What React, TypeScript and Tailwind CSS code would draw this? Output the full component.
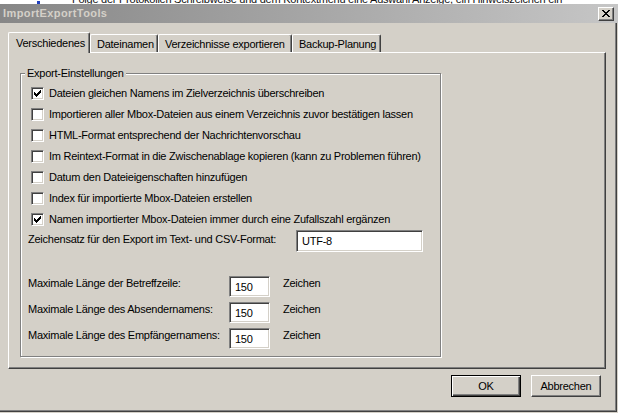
import React from 'react';

const options = [
  { label: 'Dateien gleichen Namens im Zielverzeichnis überschreiben', checked: true },
  { label: 'Importieren aller Mbox-Dateien aus einem Verzeichnis zuvor bestätigen lassen', checked: false },
  { label: 'HTML-Format entsprechend der Nachrichtenvorschau', checked: false },
  { label: 'Im Reintext-Format in die Zwischenablage kopieren (kann zu Problemen führen)', checked: false },
  { label: 'Datum den Dateieigenschaften hinzufügen', checked: false },
  { label: 'Index für importierte Mbox-Dateien erstellen', checked: false },
  { label: 'Namen importierter Mbox-Dateien immer durch eine Zufallszahl ergänzen', checked: true },
];

const limits = [
  'Maximale Länge der Betreffzeile:',
  'Maximale Länge des Absendernamens:',
  'Maximale Länge des Empfängernamens:',
];

const tabs = [
  { label: 'Verschiedenes', w: 'w-[82px]', active: true },
  { label: 'Dateinamen', w: 'w-[68px]', active: false },
  { label: 'Verzeichnisse exportieren', w: 'w-[134px]', active: false },
  { label: 'Backup-Planung', w: 'w-[89px]', active: false },
];

// win2000 style bevels
const sunken =
  'border border-t-[#808080] border-l-[#808080] border-r-white border-b-white shadow-[inset_1px_1px_0_#404040,inset_-1px_-1px_0_#d4d0c8]';
const raised =
  'border border-t-white border-l-white border-r-[#404040] border-b-[#404040] shadow-[inset_-1px_-1px_0_#808080]';

function CheckMark() {
  const cols = [2, 3, 4, 3, 2, 1, 0];
  return (
    <svg width="7" height="7" viewBox="0 0 7 7" shapeRendering="crispEdges">
      {cols.map((y, i) => (
        <rect key={i} x={i} y={y} width="1" height="3" fill="#000" />
      ))}
    </svg>
  );
}

function CloseGlyph() {
  const rows = [[0, 1, 6, 7], [1, 2, 5, 6], [2, 3, 4, 5], [3, 4], [2, 3, 4, 5], [1, 2, 5, 6], [0, 1, 6, 7]];
  return (
    <svg width="8" height="7" viewBox="0 0 8 7" shapeRendering="crispEdges">
      {rows.map((xs, y) => xs.map((x) => <rect key={`${x}-${y}`} x={x} y={y} width="1" height="1" fill="#000" />))}
    </svg>
  );
}

function Checkbox({ checked }: { checked: boolean }) {
  return (
    <span className={`w-[13px] h-[13px] shrink-0 bg-white flex items-center justify-center ${sunken}`}>
      {checked && <CheckMark />}
    </span>
  );
}

export default function App() {
  return (
    <div className="w-[618px] h-[413px] overflow-hidden bg-white flex flex-col font-['Liberation_Sans',Arial,sans-serif] text-[11px] leading-[13px] tracking-[-0.25px] text-black">
      {/* bit of the page behind the dialog */}
      <div className="h-[4px] shrink-0 overflow-hidden flex">
        <span className="ml-[37px] mt-[1px] w-[3px] h-[3px] bg-[#2040c0]" />
        <span className="ml-[32px] -mt-[7px] whitespace-nowrap text-[#111]">
          Folge der Protokollen Schreibweise und dem Kontextmenü eine Auswahl Anzeige, ein Hinweiszeichen ein
        </span>
      </div>

      {/* title bar */}
      <div className="h-[19px] shrink-0 flex items-center justify-between pl-[3px] pr-[4px] bg-gradient-to-r from-[#878787] to-[#c6c6c6]">
        <span className="font-bold text-[#d4d0c8] tracking-[0.4px]">ImportExportTools</span>
        <button className={`w-[16px] h-[14px] bg-[#d4d0c8] flex items-center justify-center ${raised}`}>
          <CloseGlyph />
        </button>
      </div>

      <div className="flex-1 bg-[#d4d0c8]">
        <div className="w-[617px] h-[389px] border-r border-b border-[#404040] shadow-[inset_-1px_-1px_0_#808080] flex flex-col">
          {/* tabs */}
          <div className="mt-[9px] h-[20px] pl-[8px] flex items-end">
            {tabs.map((t) => (
              <div
                key={t.label}
                className={`${t.w} ${
                  t.active ? 'h-[21px] -mb-px relative z-10 pl-[7px] pt-[4px]' : 'h-[18px] pl-[6px] pt-[3px]'
                } bg-[#d4d0c8] whitespace-nowrap rounded-t-[2px] border-t border-l border-r border-t-white border-l-white border-r-[#404040] shadow-[inset_-1px_0_0_#808080]`}
              >
                {t.label}
              </div>
            ))}
          </div>

          {/* panel */}
          <div className={`ml-[8px] w-[598px] h-[317px] shrink-0 ${raised}`}>
            <fieldset className="ml-[11px] mt-[14px] w-[421px] pl-[7px] pt-[3px] pb-[7px] border border-[#808080] shadow-[inset_1px_1px_0_white,1px_1px_0_white]">
              <legend className="-ml-[3px] px-[2px] bg-[#d4d0c8]">Export-Einstellungen</legend>

              {options.map((o) => (
                <div key={o.label} className="h-[21px] pl-[3px] flex items-center gap-[5px] whitespace-nowrap">
                  <Checkbox checked={o.checked} />
                  <span>{o.label}</span>
                </div>
              ))}

              <div className="flex items-start">
                <span className="w-[268px] mt-[3px] whitespace-nowrap">
                  Zeichensatz für den Export im Text- und CSV-Format:
                </span>
                <input
                  readOnly
                  value="UTF-8"
                  className={`w-[127px] h-[22px] bg-white pl-[5px] outline-none ${sunken}`}
                />
              </div>

              <div className="mt-[24px] flex flex-col gap-[5px]">
                {limits.map((l) => (
                  <div key={l} className="flex items-start">
                    <span className="w-[201px] mt-[1px] whitespace-nowrap">{l}</span>
                    <input
                      readOnly
                      value="150"
                      className={`w-[41px] h-[21px] bg-white pl-[5px] outline-none ${sunken}`}
                    />
                    <span className="ml-[13px] mt-[1px]">Zeichen</span>
                  </div>
                ))}
              </div>
            </fieldset>
          </div>

          {/* buttons */}
          <div className="ml-[8px] w-[598px] mt-[6px] pr-[5px] flex justify-end gap-[10px]">
            <button className="w-[70px] h-[22px] bg-[#d4d0c8] border border-black shadow-[inset_1px_1px_0_white,inset_-1px_-1px_0_#404040,inset_-2px_-2px_0_#808080]">
              OK
            </button>
            <button className={`w-[70px] h-[22px] bg-[#d4d0c8] ${raised}`}>Abbrechen</button>
          </div>
        </div>
      </div>
    </div>
  );
}
